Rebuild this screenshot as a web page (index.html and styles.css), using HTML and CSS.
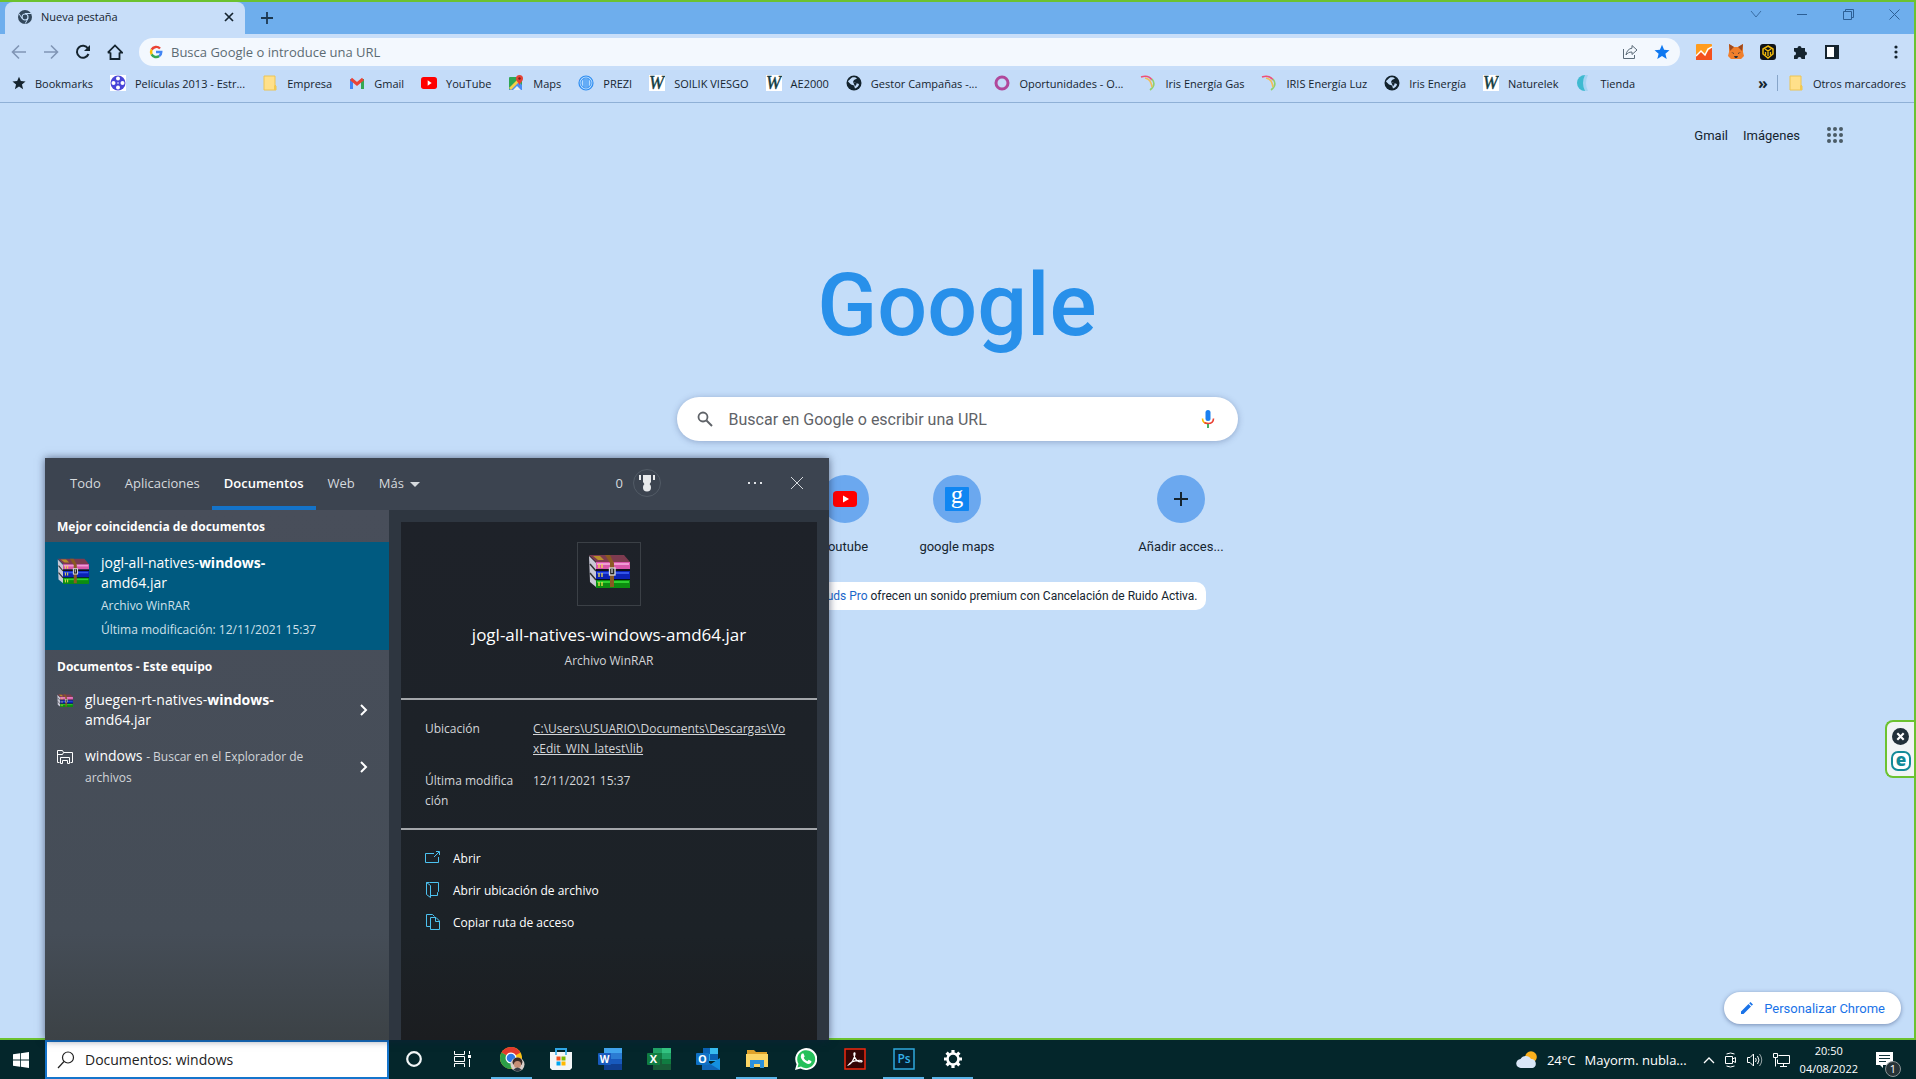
FILE: index.html
```
<!DOCTYPE html>
<html lang="es">
<head>
  <meta charset="UTF-8">
  <meta name="viewport" content="width=device-width, initial-scale=1.0">
  <title>Nueva pestaña</title>
  <link rel="stylesheet" href="styles.css">
</head>
<body>
  <!-- Shared icons -->
  <svg class="defs" width="0" height="0">
    <symbol id="winrar" viewBox="0 0 42 34">
      <path d="M1 2 L8 9 V33 L2 28Z" fill="#c9c9d6"/>
      <path d="M2 10l6 7M2 19l6 7" stroke="#333" stroke-width="1.5"/>
      <path d="M1 1 L36 1 L42 8 H8Z" fill="#7d3b4f"/>
      <path d="M5 2h7l4 4h-6z" fill="#b8902a"/>
      <path d="M8 8h34v7H8z" fill="#d958ab"/>
      <path d="M9 9h32v2H9z" fill="#f09bd4"/>
      <path d="M8 15h34v2H8z" fill="#10101c"/>
      <path d="M8 17h34v8H8z" fill="#0b22b5"/>
      <path d="M9 18h32v2H9z" fill="#3355e8"/>
      <path d="M8 25h34v1H8z" fill="#061018"/>
      <path d="M8 26h34v8H8z" fill="#0c8d10"/>
      <path d="M9 27h32v2H9z" fill="#2fd130"/>
      <path d="M11 10v4M14 10v4M11 19v4M14 19v4M11 28v4M14 28v4" stroke="#f2e04a" stroke-width="1.3"/>
      <path d="M17 1h5l4 8v24h-4V9z" fill="#8a5a22"/>
      <rect x="21.500" y="14" width="5.500" height="7" fill="#222" stroke="#ddd" stroke-width="1.300"/>
      <path d="M24 15v4" stroke="#fff"/>
    </symbol>
    <symbol id="folder" viewBox="0 0 16 16">
      <path d="M2 1h11v9l1 1v4H2z" fill="#ffe08a" stroke="#ecc455"/>
      <path d="M12 10l2 1v4h-2z" fill="#f2c94f"/>
    </symbol>
    <symbol id="youtube" viewBox="0 0 24 18">
      <rect width="24" height="18" rx="4" fill="#f00"/>
      <path d="M10 5l6 4-6 4z" fill="#fff"/>
    </symbol>
    <symbol id="globe" viewBox="0 0 16 16">
      <circle cx="8" cy="8" r="7.500" fill="#13232d"/>
      <path d="M6 2.500c2-.6 4 0 5 1l-3 1.500-1 2 3 1 3 1c0 2-2 4-4 4.500l-1-3-3-1-3-3c0-1 2-2 4-4z" fill="#c3dcf8"/>
      <path d="M7 7l4 1.500-2 3-1-2.500z" fill="#13232d"/>
    </symbol>
    <symbol id="wlogo" viewBox="0 0 16 16">
      <rect width="16" height="16" fill="#fff"/>
      <text x="0" y="14" font-family="Liberation Serif, serif" font-style="italic" font-size="18" fill="#123c42" stroke="#123c42" stroke-width=".4">W</text>
    </symbol>
    <symbol id="iris" viewBox="0 0 16 16">
      <g fill="none" stroke-width="1.600">
        <path d="M1 2c6-2 9 0 11 3" stroke="#ef5078"/>
        <path d="M12 4c3 4 2 8-2 11" stroke="#8fd16c"/>
        <path d="M5 3c5 1 6 4 7 9" stroke="#f3bd57"/>
      </g>
    </symbol>
    <symbol id="google-g" viewBox="0 0 16 16">
      <g fill="none" stroke-width="2.800">
        <path d="M12.600 4A6 6 0 0 0 3 5.300" stroke="#ea4335"/>
        <path d="M3 5.300a6 6 0 0 0 0 5.400" stroke="#fbbc05"/>
        <path d="M3 10.700a6 6 0 0 0 8.700 2" stroke="#34a853"/>
        <path d="M11.700 12.700A6 6 0 0 0 14 8H8" stroke="#4285f4"/>
      </g>
    </symbol>
    <symbol id="star" viewBox="0 0 16 16">
      <path d="M8 .8l2.100 5 5.400.400-4.100 3.500 1.300 5.300L8 12.100 3.300 15l1.300-5.300L.5 6.200l5.400-.4z" fill="currentColor"/>
    </symbol>
    <symbol id="close" viewBox="0 0 16 16">
      <path d="M2 2l12 12M14 2L2 14" fill="none" stroke="currentColor"/>
    </symbol>
    <symbol id="chevron" viewBox="0 0 10 16">
      <path d="M2 3l5 5-5 5" fill="none" stroke="currentColor" stroke-width="2"/>
    </symbol>
  </svg>

  <div class="browser">
    <header class="tabstrip">
      <div class="tab">
        <svg width="14" height="14" viewBox="0 0 14 14"><circle cx="7" cy="7" r="7" fill="#33485c"/><circle cx="7" cy="7" r="3" fill="#33485c" stroke="#c3dcf8" stroke-width="1.200"/><path d="M7 3.500h6M4 8.500L1.200 3.800M10 8.500L7.200 13.600" stroke="#c3dcf8"/></svg>
        <span class="tab-title">Nueva pestaña</span>
        <button class="icon-btn" aria-label="Cerrar pestaña"><svg width="10" height="10" viewBox="0 0 10 10"><path d="M1 1l8 8M9 1L1 9" stroke="#15242f" stroke-width="1.700"/></svg></button>
      </div>
      <button class="icon-btn new-tab" aria-label="Nueva pestaña"><svg width="12" height="12" viewBox="0 0 12 12"><path d="M6 0v12M0 6h12" stroke="#1c3850" stroke-width="1.800"/></svg></button>
      <div class="window-controls">
        <button class="icon-btn" aria-label="Buscar pestañas"><svg width="12" height="8" viewBox="0 0 12 8"><path d="M1 1l5 6 5-6" fill="none" stroke="#3a6ea5"/></svg></button>
        <button class="icon-btn" aria-label="Minimizar"><svg width="10" height="10" viewBox="0 0 10 10"><path d="M0 5.500h10" stroke="#2c5f95"/></svg></button>
        <button class="icon-btn" aria-label="Restaurar"><svg width="11" height="11" viewBox="0 0 11 11"><path d="M.5 2.500h8v8h-8zM2.500 2.500v-2h8v8h-2" fill="none" stroke="#2c5f95"/></svg></button>
        <button class="icon-btn" aria-label="Cerrar"><svg width="11" height="11" viewBox="0 0 11 11"><path d="M.5.5l10 10M10.500.5l-10 10" stroke="#2c5f95"/></svg></button>
      </div>
    </header>

    <div class="toolbar">
      <button class="icon-btn" aria-label="Atrás"><svg width="16" height="16" viewBox="0 0 16 16"><path d="M15 8H2M8 1.500L1.500 8 8 14.500" fill="none" stroke="#8095b5" stroke-width="1.600"/></svg></button>
      <button class="icon-btn" aria-label="Adelante"><svg width="16" height="16" viewBox="0 0 16 16"><path d="M1 8h13M8 1.500L14.500 8 8 14.500" fill="none" stroke="#8095b5" stroke-width="1.600"/></svg></button>
      <button class="icon-btn" aria-label="Recargar"><svg width="16" height="16" viewBox="0 0 16 16"><path d="M13.500 10A6 6 0 1 1 13 4.500" fill="none" stroke="#15242f" stroke-width="2"/><path d="M15 1v6H9z" fill="#15242f"/></svg></button>
      <button class="icon-btn" aria-label="Inicio"><svg width="16" height="16" viewBox="0 0 16 16"><path d="M3.500 8.500v6.500h9V8.500M.8 8.600L8 1.400l7.200 7.200h-2.700M3.500 8.600H.8" fill="none" stroke="#15242f" stroke-width="1.800"/></svg></button>
      <div class="omnibox">
        <svg width="14" height="14"><use href="#google-g"/></svg>
        <input type="text" aria-label="Barra de direcciones" placeholder="Busca Google o introduce una URL">
        <button class="icon-btn" aria-label="Compartir"><svg width="16" height="16" viewBox="0 0 16 16"><path d="M1.500 5v9.500h11V11" fill="none" stroke="#5b6b78"/><path d="M10 1.500L15 6l-5 4.500V8C7 8 5.500 9 4 11c.5-4 3-6.500 6-6.800z" fill="none" stroke="#5b6b78"/></svg></button>
        <button class="icon-btn bookmark-on" aria-label="Marcador"><svg width="16" height="16"><use href="#star"/></svg></button>
      </div>
      <div class="extensions">
        <button class="icon-btn" aria-label="Analytics"><svg width="16" height="16" viewBox="0 0 16 16"><rect width="16" height="16" rx="1" fill="#ff9c1e"/><path d="M0 12l5-5 4 3 7-7v13H0z" fill="#f4511e"/><path d="M0 12l5-5 4 4 3-6 4-2" fill="none" stroke="#fff" stroke-width="1.500"/></svg></button>
        <button class="icon-btn" aria-label="MetaMask"><svg width="16" height="16" viewBox="0 0 16 16"><path d="M1 0l5 3h4l5-3v8l1 4-3 3H3l-3-3 1-4z" fill="#f07f2c"/><path d="M1 0l5 3-4 4zM15 0l-5 3 4 4z" fill="#9b4a22"/><path d="M3 8l3 1v1zM13 8l-3 1v1zM6 12h4l-1 2H7z" fill="#2a3038"/></svg></button>
        <button class="icon-btn" aria-label="BNB"><svg width="16" height="16" viewBox="0 0 16 16"><rect width="16" height="16" rx="3" fill="#101418"/><path d="M8 2l5 3v5l-5 4-5-4V5z" fill="none" stroke="#f0b90b" stroke-width="1.500"/><path d="M5 5l3 2 3-2M8 6v6M5.500 8v3M10.500 8v3" fill="none" stroke="#f0b90b" stroke-width="1.300"/></svg></button>
        <button class="icon-btn" aria-label="Extensiones"><svg width="16" height="16" viewBox="0 0 16 16"><path d="M2 4h3.500a2 2 0 1 1 4 0H13v3.500a2 2 0 1 1 0 4V15H9.500a2 2 0 1 0-4 0H2v-3.500a2 2 0 1 0 0-4z" fill="#15242f"/></svg></button>
        <button class="icon-btn" aria-label="Panel lateral"><svg width="16" height="16" viewBox="0 0 16 16"><path d="M2 2h12v12H2z" fill="#fff" stroke="#15242f" stroke-width="2"/><path d="M10 2h4v12h-4z" fill="#15242f"/></svg></button>
      </div>
      <button class="icon-btn menu-btn" aria-label="Menú"><svg width="4" height="14" viewBox="0 0 4 14"><g fill="#15242f"><circle cx="2" cy="2" r="1.600"/><circle cx="2" cy="7" r="1.600"/><circle cx="2" cy="12" r="1.600"/></g></svg></button>
    </div>

    <nav class="bookmarks">
      <a href="#"><svg width="14" height="16"><use href="#star"/></svg>Bookmarks</a>
      <a href="#"><svg width="16" height="16" viewBox="0 0 16 16"><rect width="16" height="16" fill="#fff"/><circle cx="8" cy="8" r="7.500" fill="#4945d8"/><g fill="#fff"><circle cx="8" cy="3.500" r="2"/><circle cx="8" cy="12.500" r="2"/><circle cx="3.500" cy="8" r="2"/><circle cx="12.500" cy="8" r="2"/><circle cx="8" cy="8" r=".8"/></g></svg>Películas 2013 - Estr...</a>
      <a href="#"><svg width="16" height="16"><use href="#folder"/></svg>Empresa</a>
      <a href="#"><svg width="16" height="16" viewBox="0 0 16 16"><path d="M2.500 14V4" stroke="#4285f4" stroke-width="3"/><path d="M13.500 14V4" stroke="#34a853" stroke-width="3"/><path d="M2 4l6 5 6-5" fill="none" stroke="#ea4335" stroke-width="3"/></svg>Gmail</a>
      <a href="#"><svg width="16" height="12"><use href="#youtube"/></svg>YouTube</a>
      <a href="#"><svg width="16" height="16" viewBox="0 0 16 16"><rect x="1" y="2" width="13" height="13" rx="1" fill="#2fa653"/><path d="M1 15L10 6l4 4v5z" fill="#4a8cf5"/><path d="M1 13L11 3l2 2L3 15z" fill="#f7d04a"/><path d="M5 15l4-4 4 4z" fill="#e8eef5"/><path d="M11.500 0a3.500 3.500 0 0 1 3.500 3.500c0 3-3 4-3.500 7-.5-3-3.500-4-3.500-7A3.500 3.500 0 0 1 11.500 0z" fill="#e64335"/><circle cx="11.500" cy="3.500" r="1.200" fill="#7c2018"/></svg>Maps</a>
      <a href="#"><svg width="16" height="16" viewBox="0 0 16 16"><circle cx="8" cy="8" r="7" fill="#b7dcff" stroke="#2d8cf0" stroke-width="1.200"/><circle cx="8" cy="8" r="5" fill="none" stroke="#2d8cf0"/><path d="M6 4v8M8 4v8M10 4v8" stroke="#2d8cf0" stroke-width="1.200"/></svg>PREZI</a>
      <a href="#"><svg width="16" height="16"><use href="#wlogo"/></svg>SOILIK VIESGO</a>
      <a href="#"><svg width="16" height="16"><use href="#wlogo"/></svg>AE2000</a>
      <a href="#"><svg width="16" height="16"><use href="#globe"/></svg>Gestor Campañas -...</a>
      <a href="#"><svg width="16" height="16" viewBox="0 0 16 16"><circle cx="8" cy="8" r="6" fill="none" stroke="#b0489b" stroke-width="3"/></svg>Oportunidades - O...</a>
      <a href="#"><svg width="16" height="16"><use href="#iris"/></svg>Iris Energía Gas</a>
      <a href="#"><svg width="16" height="16"><use href="#iris"/></svg>IRIS Energía Luz</a>
      <a href="#"><svg width="16" height="16"><use href="#globe"/></svg>Iris Energía</a>
      <a href="#"><svg width="16" height="16"><use href="#wlogo"/></svg>Naturelek</a>
      <a href="#"><svg width="16" height="16" viewBox="0 0 16 16"><path d="M9 0A8 8 0 0 0 9 16z" fill="#3fbad0"/><path d="M9 0h3q-4 8 0 16H9q-4-8 0-16z" fill="#a5d3f2"/></svg>Tienda</a>
      <button class="more-bookmarks" aria-label="Más marcadores">»</button>
      <a href="#" class="others"><svg width="16" height="16"><use href="#folder"/></svg>Otros marcadores</a>
    </nav>

    <main class="newtab">
      <nav class="top-links">
        <a href="#">Gmail</a>
        <a href="#">Imágenes</a>
        <button class="icon-btn" aria-label="Aplicaciones de Google"><svg width="16" height="16" viewBox="0 0 16 16"><g fill="#4b5b66"><circle cx="2" cy="2" r="2"/><circle cx="8" cy="2" r="2"/><circle cx="14" cy="2" r="2"/><circle cx="2" cy="8" r="2"/><circle cx="8" cy="8" r="2"/><circle cx="14" cy="8" r="2"/><circle cx="2" cy="14" r="2"/><circle cx="8" cy="14" r="2"/><circle cx="14" cy="14" r="2"/></g></svg></button>
      </nav>
      <h1 class="logo">Google</h1>
      <form class="search-box">
        <svg width="16" height="16" viewBox="0 0 16 16"><circle cx="6" cy="6" r="4.500" fill="none" stroke="#5f6368" stroke-width="1.800"/><path d="M9.500 9.500l5.500 5.500" stroke="#5f6368" stroke-width="2"/></svg>
        <input type="text" aria-label="Buscar" placeholder="Buscar en Google o escribir una URL">
        <button class="icon-btn" type="button" aria-label="Buscar por voz"><svg width="14" height="18" viewBox="0 0 14 18"><rect x="4.500" y="0" width="5" height="11" rx="2.500" fill="#1a80f0"/><path d="M1.500 8.500c0 3 2 5 5.500 5" fill="none" stroke="#fbbc05" stroke-width="1.600"/><path d="M12.500 8.500c0 3-2 5-5.500 5-1.500 0-2.500-.3-3.500-1" fill="none" stroke="#ea4335" stroke-width="1.600"/><path d="M7 14v4" stroke="#34a853" stroke-width="1.800"/></svg></button>
      </form>
      <div class="shortcuts">
        <a href="#" class="shortcut shortcut-youtube"><span class="circle"><svg width="24" height="16" viewBox="0 0 24 18" preserveAspectRatio="none"><use href="#youtube"/></svg></span>youtube</a>
        <a href="#" class="shortcut"><span class="circle"><svg width="24" height="24" viewBox="0 0 24 24"><rect width="24" height="24" rx="1" fill="#0f86f2"/><text x="12" y="16" text-anchor="middle" font-family="Liberation Serif, serif" font-size="25" fill="#fff">g</text></svg></span>google maps</a>
        <a href="#" class="shortcut shortcut-add"><span class="circle"><svg width="14" height="14" viewBox="0 0 14 14"><path d="M7 0v14M0 7h14" stroke="#15242f" stroke-width="2"/></svg></span>Añadir acces...</a>
      </div>
      <p class="promo"><a href="#">Estos nuevos Pixel Buds Pro</a> ofrecen un sonido premium con Cancelación de Ruido Activa.</p>
      <button class="customize"><svg width="14" height="14" viewBox="0 0 14 14"><path d="M1 10.500V13h2.500L11 5.500 8.500 3zM9.200 2.300l2.500 2.500 1.300-1.300L10.500 1z" fill="#1a73e8"/></svg>Personalizar Chrome</button>
    </main>

    <aside class="side-widget">
      <button class="icon-btn" aria-label="Cerrar"><svg width="17" height="17" viewBox="0 0 16 16"><circle cx="8" cy="8" r="8" fill="#22303a"/><path d="M5 5l6 6M11 5l-6 6" stroke="#fff" stroke-width="2"/></svg></button>
      <button class="icon-btn" aria-label="Abrir"><svg width="20" height="20" viewBox="0 0 20 20"><rect x="1" y="1" width="18" height="18" rx="6" fill="#fff" stroke="#128a98" stroke-width="2"/><text x="10" y="15" text-anchor="middle" font-family="Open Sans, sans-serif" font-weight="800" font-size="17" fill="#128a98">e</text></svg></button>
    </aside>
  </div>

  <section class="search-panel">
    <header class="panel-tabs">
      <button>Todo</button>
      <button>Aplicaciones</button>
      <button class="active">Documentos</button>
      <button>Web</button>
      <button>Más <span class="caret"></span></button>
      <div class="panel-tools">
        <span>0</span>
        <button class="medal" aria-label="Rewards"><svg width="18" height="20" viewBox="0 0 18 20"><path d="M5 2h8v7l-2 3H7L5 9z" fill="#e8eaec"/><path d="M2 2v5M16 2v5" stroke="#e8eaec" stroke-width="2"/><circle cx="9" cy="14.500" r="4" fill="#e8eaec"/></svg></button>
        <button class="dots" aria-label="Opciones"><svg width="16" height="4" viewBox="0 0 16 4"><path d="M1 1h2v2H1zM7 1h2v2H7zM13 1h2v2h-2z" fill="#dfe3e6"/></svg></button>
        <button aria-label="Cerrar"><svg width="16" height="16"><use href="#close"/></svg></button>
      </div>
    </header>
    <div class="panel-body">
      <div class="results">
        <h2>Mejor coincidencia de documentos</h2>
        <a href="#" class="best-match">
          <svg width="32" height="26" viewBox="0 0 42 34"><use href="#winrar"/></svg>
          <span class="best-text">
            <span class="name">jogl-all-natives-<b>windows-</b><br>amd64.jar</span>
            <span class="meta">Archivo WinRAR</span>
            <span class="meta">Última modificación: 12/11/2021 15:37</span>
          </span>
        </a>
        <h2>Documentos - Este equipo</h2>
        <a href="#" class="result">
          <svg width="16" height="13" viewBox="0 0 42 34"><use href="#winrar"/></svg>
          <span class="name">gluegen-rt-natives-<b>windows-</b><br>amd64.jar</span>
          <svg class="arrow" width="10" height="16"><use href="#chevron"/></svg>
        </a>
        <a href="#" class="result">
          <svg width="16" height="15" viewBox="0 0 16 15"><path d="M2.500 12.500h-2V.5h5l1 2h9v10h-2M.5 4.500h5l1-2" fill="none" stroke="#fff"/><path d="M3.500 13.500v-6h9v6h-2v-3h-5v3z" fill="none" stroke="#fff"/></svg>
          <span class="name">windows <span class="hint">- Buscar en el Explorador de archivos</span></span>
          <svg class="arrow" width="10" height="16"><use href="#chevron"/></svg>
        </a>
      </div>
      <div class="detail">
        <div class="detail-head">
          <div class="thumb"><svg width="42" height="34" viewBox="0 0 42 34"><use href="#winrar"/></svg></div>
          <h3>jogl-all-natives-windows-amd64.jar</h3>
          <p>Archivo WinRAR</p>
        </div>
        <dl class="props">
          <dt>Ubicación</dt>
          <dd><a href="#">C:\Users\USUARIO\Documents\Descargas\VoxEdit_WIN_latest\lib</a></dd>
          <dt>Última modificación</dt>
          <dd>12/11/2021 15:37</dd>
        </dl>
        <div class="actions">
          <button><svg width="16" height="16" viewBox="0 0 16 16"><path d="M9 3.500H.5v9h13V7M9 7l5-5M11 1.500h3.500V5" fill="none" stroke="#4cc2f0"/></svg>Abrir</button>
          <button><svg width="16" height="16" viewBox="0 0 16 16"><path d="M4.500.5h9v9l-1 1v3h-7M1.500.5l4 3v12l-4-3zM1.500.5h3" fill="none" stroke="#4cc2f0"/></svg>Abrir ubicación de archivo</button>
          <button><svg width="16" height="16" viewBox="0 0 16 16"><path d="M5 12.500H1.500v-12h6l2 2M5.500 3.500h5.500l3.500 3.500v8.500h-9zM10.500 4v3.500h4" fill="none" stroke="#4cc2f0"/></svg>Copiar ruta de acceso</button>
        </div>
      </div>
    </div>
  </section>

  <footer class="taskbar">
    <button class="start" aria-label="Inicio"><svg width="16" height="16" viewBox="0 0 16 16"><path d="M0 2.300L7 1.300V7.600H0zM7.800 1.200L16 0v7.600H7.800zM0 8.400h7v6.300l-7-1zM7.800 8.400H16V16l-8.200-1.200z" fill="#fff"/></svg></button>
    <label class="task-search">
      <svg width="18" height="18" viewBox="0 0 18 18"><circle cx="11" cy="6.500" r="5.500" fill="none" stroke="#222" stroke-width="1.200"/><path d="M7 10.500L1 17" stroke="#222" stroke-width="1.200"/></svg>
      <input type="text" aria-label="Buscar en Windows" value="Documentos: windows">
    </label>
    <div class="apps">
      <button aria-label="Cortana"><svg width="16" height="16" viewBox="0 0 16 16"><circle cx="8" cy="8" r="6.800" fill="none" stroke="#f2f6f7" stroke-width="2.200"/></svg></button>
      <button aria-label="Vista de tareas"><svg width="17" height="16" viewBox="0 0 17 16"><path d="M.5 0v3.500h10V0M.5 16v-3.500h10V16M.5 5.500h10v5H.5zM15.500 0v3M15.500 8v8" fill="none" stroke="#fff"/><path d="M14 4h3v3h-3z" fill="#fff"/></svg></button>
      <button class="running" aria-label="Chrome"><svg width="26" height="26" viewBox="0 0 26 26"><circle cx="12" cy="12" r="11" fill="#fbc116"/><path d="M12 12L2.500 6.500a11 11 0 0 1 19 0z" fill="#e33b2e"/><path d="M12 12L2.500 6.500A11 11 0 0 0 12 23l5-8z" fill="#2c9f48"/><circle cx="12" cy="12" r="5.500" fill="#fff"/><circle cx="12" cy="12" r="4.300" fill="#2e79e8"/><circle cx="18.500" cy="18.500" r="7" fill="#d9cfca"/><path d="M13.500 17a5 5 0 0 1 10-1l-1 3H15z" fill="#392a27"/><circle cx="18.500" cy="18.500" r="3.600" fill="#c58e76"/><path d="M14 24q4.500-5 9 0l-4.500 1.500z" fill="#333b45"/></svg></button>
      <button aria-label="Microsoft Store"><svg width="24" height="24" viewBox="0 0 24 24"><path d="M7 7V2h10v5" fill="none" stroke="#31a8e8" stroke-width="2"/><path d="M1 5h22v16l-2 2H3l-2-2z" fill="#f3f5f7"/><path d="M7 8V5M17 8V5" stroke="#31a8e8" stroke-width="1.500"/><path d="M7.500 9.500h4v4h-4z" fill="#f25022"/><path d="M12.500 9.500h4v4h-4z" fill="#7fba00"/><path d="M7.500 14.500h4v4h-4z" fill="#00a4ef"/><path d="M12.500 14.500h4v4h-4z" fill="#ffb900"/></svg></button>
      <button aria-label="Word"><svg width="24" height="22" viewBox="0 0 24 22"><path d="M6 0h18v6H6z" fill="#41a5ee"/><path d="M6 5h18v6H6z" fill="#2b7cd3"/><path d="M6 11h18v6H6z" fill="#185abd"/><path d="M6 16h18v6H6z" fill="#103f91"/><rect y="5" width="13" height="12" rx="1" fill="#185abd"/><text x="6.500" y="15" text-anchor="middle" font-family="Open Sans, sans-serif" font-weight="700" font-size="10" fill="#fff">W</text></svg></button>
      <button aria-label="Excel"><svg width="24" height="22" viewBox="0 0 24 22"><path d="M6 0h9v6H6z" fill="#21a366"/><path d="M15 0h9v6h-9z" fill="#33c481"/><path d="M6 5h9v6H6z" fill="#107c41"/><path d="M15 5h9v6h-9z" fill="#21a366"/><path d="M6 11h9v11H6z" fill="#185c37"/><path d="M15 11h9v6h-9z" fill="#107c41"/><path d="M15 16h9v6h-9z" fill="#185c37"/><rect y="5" width="13" height="12" rx="1" fill="#107c41"/><text x="6.500" y="15" text-anchor="middle" font-family="Open Sans, sans-serif" font-weight="700" font-size="11" fill="#fff">X</text></svg></button>
      <button aria-label="Outlook"><svg width="24" height="22" viewBox="0 0 24 22"><path d="M7 0h15v13H7z" fill="#28a8ea"/><path d="M7 0h7v6H7zM14 6h8v6h-8z" fill="#0a62b5"/><path d="M14 0h8v6h-8z" fill="#38bdf2"/><path d="M6 22V11l9 5 9-6v12z" fill="#1490df"/><path d="M6 11l18 11H6z" fill="#1066b8"/><rect y="5" width="13" height="12" rx="1" fill="#0f70c4"/><text x="6.500" y="15" text-anchor="middle" font-family="Open Sans, sans-serif" font-weight="700" font-size="11" fill="#fff">O</text></svg></button>
      <button class="running" aria-label="Explorador"><svg width="22" height="20" viewBox="0 0 22 20"><path d="M1 1h7l2 2h11v5H1z" fill="#e0a32b"/><path d="M0 5h22v13H0z" fill="#fcd565"/><path d="M4 19v-8h14v8h-4v-4H8v4z" fill="#2c90dc"/></svg></button>
      <button aria-label="WhatsApp"><svg width="22" height="22" viewBox="0 0 22 22"><path d="M0 22l1.600-5.700A11 11 0 1 1 5.500 20.400z" fill="#fff"/><path d="M2.500 19.500l1-3.700A9 9 0 1 1 6 18.500z" fill="#25c05a"/><path d="M7 5.500l1.500 0 1.200 3-1 1.300c1 1.800 2 2.700 3.700 3.500l1.300-1.500 2.800 1.500c0 2-1.500 2.700-3 2.700-3.500-.500-7-4-7.700-7 0-1.500.5-3 1.200-3.500z" fill="#fff"/></svg></button>
      <button aria-label="Acrobat"><svg width="22" height="22" viewBox="0 0 22 22"><rect x="1" y="1" width="20" height="20" fill="#330505" stroke="#f0280f" stroke-width="1.500"/><path d="M4.500 17c3-1 6-6.500 6.500-11 0-2-1.500-1.500-1 1 1 4 4 7 7.500 7 1.500-.5 0-2-3-1.700-4 .2-8 1.700-10 4.700z" fill="none" stroke="#fff" stroke-width="1.200"/></svg></button>
      <button class="running" aria-label="Photoshop"><svg width="22" height="22" viewBox="0 0 22 22"><rect x="1" y="1" width="20" height="20" fill="#03202f" stroke="#2fa8dd" stroke-width="1.500"/><text x="11" y="15" text-anchor="middle" font-family="Open Sans, sans-serif" font-weight="600" font-size="12" fill="#35b2ea">Ps</text></svg></button>
      <button class="running" aria-label="Configuración"><svg width="20" height="20" viewBox="0 0 20 20"><circle cx="10" cy="10" r="5.500" fill="none" stroke="#fff" stroke-width="2.600"/><path d="M10 1v3M10 16v3M1 10h3M16 10h3M3.600 3.600l2.200 2.200M14.200 14.200l2.200 2.200M3.600 16.400l2.200-2.200M14.200 5.800l2.200-2.200" stroke="#fff" stroke-width="3.200"/></svg></button>
    </div>
    <div class="tray">
      <button class="weather"><svg width="22" height="18" viewBox="0 0 22 18"><circle cx="15" cy="6" r="5.800" fill="#fbb01c"/><path d="M5 17a4.500 4.500 0 0 1-.5-9A6 6 0 0 1 15 8a4.600 4.600 0 0 1 1.500 9z" fill="#d9e6f7"/></svg><span>24°C</span><span>Mayorm. nubla...</span></button>
      <button aria-label="Mostrar iconos ocultos"><svg width="12" height="8" viewBox="0 0 12 8"><path d="M1 7l5-5 5 5" fill="none" stroke="#fff" stroke-width="1.300"/></svg></button>
      <button aria-label="Cámara"><svg width="12" height="16" viewBox="0 0 12 16"><path d="M.5 4.500h7v7h-7zM7.500 7l3-1.500v5L7.500 9M1.500 2q4-2 8 0M1.500 14q4 2 8 0" fill="none" stroke="#fff"/></svg></button>
      <button aria-label="Volumen"><svg width="16" height="14" viewBox="0 0 16 14"><path d="M.5 4.500h2.500l3.500-3.500v12L3 9.500H.5zM8.500 5q1.500 2 0 4M10.500 3q3 4 0 8" fill="none" stroke="#fff"/><path d="M12.500 1q4.500 6 0 12" fill="none" stroke="#9aa7a9"/></svg></button>
      <button aria-label="Red"><svg width="17" height="14" viewBox="0 0 17 14"><path d="M5.500 2.500h11v8h-12V6.500M10.500 10.500v3M7 13.500h7M.5.500h4v4h-4zM2.500 4.500v9" fill="none" stroke="#fff"/></svg></button>
      <button class="clock"><span>20:50</span><span>04/08/2022</span></button>
      <button class="notify" aria-label="Notificaciones"><svg width="17" height="16" viewBox="0 0 17 16"><path d="M0 0h17v13H7v3l-3-3H0z" fill="#fff"/><path d="M3 3.500h11M3 6.500h11M3 9.500h7" stroke="#12343a"/></svg><span class="badge">1</span></button>
    </div>
  </footer>
</body>
</html>
```
FILE: styles.css
```
* {
  box-sizing: border-box;
}

body, h1, h2, h3, p, dl, dd {
  margin: 0;
}

body {
  display: flex;
  flex-direction: column;
  height: 100vh;
  overflow: hidden;
  position: relative;
  font-family: "Open Sans", "Noto Sans", sans-serif;
  font-size: 12px;
  color: #15242f;
}

.defs {
  position: absolute;
}

svg {
  display: block;
  flex: none;
}

a {
  color: inherit;
  text-decoration: none;
}

button {
  font: inherit;
  color: inherit;
  background: none;
  border: none;
  padding: 0;
  cursor: pointer;
}

input {
  font: inherit;
  color: inherit;
  background: none;
  border: none;
  outline: none;
  padding: 0;
  flex: 1;
  min-width: 0;
}

.icon-btn {
  display: flex;
  align-items: center;
  justify-content: center;
  flex: none;
}

/* browser window */
.browser {
  flex: 1;
  display: flex;
  flex-direction: column;
  position: relative;
  background-color: #c4ddf9;
  border: 2px solid #6cc230;
  border-left: none;
}

.tabstrip {
  display: flex;
  align-items: center;
  height: 32px;
  padding-left: 5px;
  background-color: #6eaeed;
}

.tab {
  display: flex;
  align-items: center;
  gap: 9px;
  width: 240px;
  height: 32px;
  padding: 0 11px 3px 13px;
  border-radius: 8px 8px 0 0;
  background-color: #c8def9;
}

.tab-title {
  flex: 1;
  font-size: 11px;
}

.new-tab {
  margin-left: 16px;
}

.window-controls {
  display: flex;
  align-items: center;
  align-self: flex-start;
  height: 24px;
  margin-left: auto;
  margin-right: -3px;
}

.window-controls .icon-btn {
  width: 46px;
}

.toolbar {
  display: flex;
  align-items: center;
  gap: 16px;
  height: 36px;
  padding: 0 16px 0 11px;
  background-color: #c8def9;
}

.omnibox {
  flex: 1;
  display: flex;
  align-items: center;
  gap: 16px;
  height: 28px;
  padding: 0 10px;
  border-radius: 14px;
  background-color: #f3f8fe;
  font-size: 13px;
}

.omnibox input {
  margin-left: -8px;
}

.omnibox input::placeholder {
  color: #5c6b73;
  opacity: 1;
}

.bookmark-on {
  color: #0f78f0;
}

.extensions {
  display: flex;
  gap: 16px;
}

.menu-btn {
  margin-left: 38px;
}

.bookmarks {
  display: flex;
  align-items: center;
  gap: 17px;
  height: 33px;
  padding: 0 8px 6px 12px;
  border-bottom: 1px solid #8fb0d6;
  background-color: #c4dcf9;
  font-size: 11px;
  white-space: nowrap;
}

.bookmarks a {
  display: flex;
  align-items: center;
  gap: 9px;
}

.more-bookmarks {
  margin-left: auto;
  font-size: 16px;
  line-height: 16px;
  font-weight: bold;
}

.bookmarks .others {
  margin-left: -8px;
  padding-left: 10px;
  border-left: 1px solid #87a5c9;
}

/* new tab page */
.newtab {
  flex: 1;
  display: flex;
  flex-direction: column;
  align-items: center;
  position: relative;
  font-family: Roboto, "Liberation Sans", sans-serif;
}

.top-links {
  align-self: flex-end;
  display: flex;
  align-items: center;
  gap: 15px;
  height: 64px;
  padding-right: 71px;
  font-size: 13px;
}

.top-links .icon-btn {
  margin-left: 12px;
}

.logo {
  margin-top: 86px;
  font-size: 88px;
  line-height: 104px;
  font-weight: 500;
  color: #2890ea;
}

.search-box {
  display: flex;
  align-items: center;
  gap: 16px;
  width: 561px;
  height: 44px;
  margin-top: 40px;
  padding: 0 23px 0 20px;
  border-radius: 22px;
  background-color: #fff;
  box-shadow: 0 1px 6px rgba(50, 70, 120, 0.35);
  font-size: 16px;
}

.search-box input::placeholder {
  color: #5f6368;
  opacity: 1;
}

.shortcuts {
  display: grid;
  grid-template-columns: repeat(5, 112px);
  height: 112px;
  margin-top: 34px;
  font-size: 13px;
}

.shortcut {
  display: flex;
  flex-direction: column;
  align-items: center;
  gap: 16px;
  line-height: 16px;
}

.shortcut-youtube {
  grid-column: 2;
}

.shortcut-add {
  grid-column: 5;
}

.circle {
  display: flex;
  align-items: center;
  justify-content: center;
  width: 48px;
  height: 48px;
  border-radius: 50%;
  background-color: #6ba8ef;
}

.promo {
  margin-top: -5px;
  padding: 0 8px;
  border-radius: 10px;
  background-color: #fff;
  line-height: 28px;
}

.promo a {
  color: #1a66c9;
}

.customize {
  position: absolute;
  right: 13px;
  bottom: 14px;
  display: flex;
  align-items: center;
  gap: 10px;
  height: 32px;
  padding: 0 16px;
  border-radius: 16px;
  background-color: #fff;
  box-shadow: 0 1px 4px rgba(40, 60, 110, 0.5);
  color: #1a73e8;
  font-size: 13px;
}

.side-widget {
  position: absolute;
  right: 0;
  top: 718px;
  display: flex;
  flex-direction: column;
  align-items: center;
  justify-content: center;
  gap: 6px;
  width: 29px;
  height: 58px;
  border: 2px solid #6cc230;
  border-right: none;
  border-radius: 8px 0 0 8px;
  background-color: #f1f4f5;
}

/* windows search flyout */
.search-panel {
  position: absolute;
  left: 45px;
  bottom: 39px;
  display: flex;
  flex-direction: column;
  width: 784px;
  height: 582px;
  background-color: #2e3640;
  box-shadow: 0 0 8px rgba(20, 30, 60, 0.6);
  color: #fff;
}

.panel-tabs {
  display: flex;
  height: 52px;
  padding: 0 24px 0 13px;
  background-color: #3c4450;
  font-size: 13px;
  color: #d6dade;
}

.panel-tabs > button {
  padding: 0 12px;
  border-bottom: 4px solid transparent;
  border-top: 2px solid transparent;
}

.panel-tabs > .active {
  border-bottom-color: #1473c8;
  color: #fff;
  font-weight: 600;
}

.caret {
  display: inline-block;
  margin-left: 3px;
  vertical-align: middle;
  border: 5px solid transparent;
  border-top-color: #d6dade;
  border-bottom: none;
}

.panel-tools {
  display: flex;
  align-items: center;
  margin-left: auto;
  padding-bottom: 2px;
}

.medal {
  display: flex;
  align-items: center;
  justify-content: center;
  width: 28px;
  height: 28px;
  margin: 0 86px 0 10px;
  border: 1px solid #525b66;
  border-radius: 50%;
}

.dots {
  margin-right: 26px;
}

.panel-body {
  flex: 1;
  display: flex;
}

.results {
  width: 344px;
  background: linear-gradient(#484e5a, #454d57 80%, #3c4246);
}

.results h2 {
  padding: 2px 12px 0;
  font-size: 12px;
  line-height: 30px;
  font-weight: bold;
}

.best-match {
  display: flex;
  gap: 12px;
  height: 108px;
  padding: 11px 12px 8px;
  background-color: #005a80;
}

.best-match > svg {
  margin-top: 5px;
}

.best-text {
  display: flex;
  flex-direction: column;
}

.name {
  flex: 1;
  font-size: 14px;
  line-height: 20px;
}

.name b {
  font-weight: 700;
}

.meta {
  font-size: 12px;
  line-height: 24px;
  color: #cfe0ea;
}

.result {
  display: flex;
  gap: 12px;
  padding: 8px 20px 8px 12px;
}

.result > svg {
  margin-top: 4px;
}

.result .arrow {
  align-self: center;
  margin-top: 0;
}

.hint {
  font-size: 12px;
  color: #d3d6da;
}

.detail {
  flex: 1;
  margin: 12px 12px 0;
  background: linear-gradient(#1e2229, #1c2227 80%, #1b1d20);
  color: #d3d5d8;
}

.detail-head {
  display: flex;
  flex-direction: column;
  align-items: center;
  height: 178px;
  padding-top: 20px;
  border-bottom: 2px solid #a3a6aa;
}

.thumb {
  padding: 11px 10px;
  width: 64px;
  height: 64px;
  border: 1px solid #3b4046;
}

.detail-head h3 {
  margin-top: 16px;
  font-size: 17px;
  line-height: 26px;
  font-weight: normal;
  color: #fff;
}

.detail-head p {
  line-height: 26px;
}

.props {
  display: grid;
  grid-template-columns: 92px 1fr;
  gap: 12px 16px;
  height: 130px;
  padding: 19px 28px 0 24px;
  border-bottom: 2px solid #a3a6aa;
  align-content: start;
  line-height: 20px;
  word-break: break-all;
}

.props a {
  text-decoration: underline;
}

.actions {
  padding: 12px 24px;
  color: #fff;
}

.actions button {
  display: flex;
  align-items: center;
  gap: 12px;
  height: 32px;
}

/* taskbar */
.taskbar {
  display: flex;
  align-items: stretch;
  height: 39px;
  background-color: #04262b;
  color: #fff;
}

.taskbar button {
  display: flex;
  align-items: center;
  justify-content: center;
}

.start {
  width: 45px;
  padding-right: 3px;
}

.task-search {
  display: flex;
  align-items: center;
  gap: 10px;
  width: 344px;
  padding: 0 10px;
  border: 2px solid #1575cc;
  background-color: #fff;
  color: #222;
  font-size: 14px;
}

.apps {
  display: flex;
}

.apps button {
  width: 49px;
  border-bottom: 2px solid transparent;
}

.apps .running {
  width: 41px;
  margin: 0 4px;
  border-bottom-color: #5ab4e8;
}

.tray {
  display: flex;
  gap: 10px;
  margin-left: auto;
  padding-right: 16px;
}

.tray .weather {
  gap: 9px;
  margin-right: 6px;
  font-size: 13px;
}

.tray .clock {
  flex-direction: column;
  line-height: 18px;
  font-size: 11px;
}

.tray .notify {
  position: relative;
  width: 32px;
}

.badge {
  position: absolute;
  right: -1px;
  bottom: 2px;
  width: 16px;
  height: 16px;
  border: 1px solid #8b9496;
  border-radius: 50%;
  background-color: #263337;
  font-size: 11px;
  line-height: 14px;
  text-align: center;
}
```
